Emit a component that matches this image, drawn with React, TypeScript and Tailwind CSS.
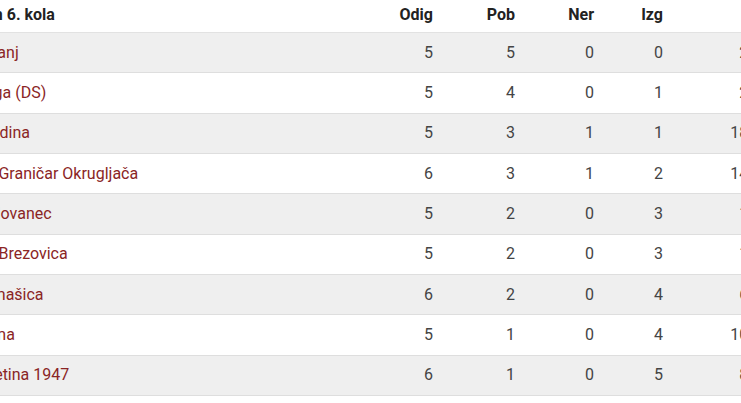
const rows = [
  { name: "Vrbanj", p: [5, 5, 0, 0], g: "23:4", shift: "" },
  { name: "Sloga (DS)", p: [5, 4, 0, 1], g: "21:7", shift: "-ml-[2px]" },
  { name: "Mladina", p: [5, 3, 1, 1], g: "18:10", shift: "" },
  { name: "NK Graničar Okrugljača", p: [6, 3, 1, 2], g: "14:12", shift: "" },
  { name: "Radovanec", p: [5, 2, 0, 3], g: "11:9", shift: "" },
  { name: "NK Brezovica", p: [5, 2, 0, 3], g: "10:9", shift: "" },
  { name: "Bunašica", p: [6, 2, 0, 4], g: "6:14", shift: "ml-[5px]" },
  { name: "Vrbna", p: [5, 1, 0, 4], g: "10:17", shift: "" },
  { name: "Podetina 1947", p: [6, 1, 0, 5], g: "8:19", shift: "-ml-[7px]" },
];

const cols = "grid grid-cols-[400px_70px_82px_79px_69px_107px]";

export default function App() {
  return (
    <div className="w-[741px] h-[403px] overflow-hidden bg-white font-['Roboto',sans-serif] text-[16px]">
      <div className="-ml-[27px] w-[810px]">
        <div className={`${cols} h-[33px] pb-[2px] items-center font-bold text-[#222] border-b border-[#e2e2e2]`}>
          <div className="whitespace-nowrap -ml-[78px]">Poredak nakon 6. kola</div>
          <div className="text-right pr-[10px]">Odig</div>
          <div className="text-right pr-[10px]">Pob</div>
          <div className="text-right pr-[10px]">Ner</div>
          <div className="text-right pr-[10px]">Izg</div>
          <div />
        </div>
        {rows.map((r, i) => (
          <div
            key={r.name}
            className={`${cols} h-[40.33px] items-center border-b border-[#dedede] ${i % 2 === 0 ? "bg-[#efefef]" : "bg-white"}`}
          >
            <div className={`text-[#8a2525] whitespace-nowrap ${r.shift}`}>{r.name}</div>
            {r.p.map((v, j) => (
              <div key={j} className="text-right pr-[10px] text-[#444]">
                {v}
              </div>
            ))}
            <div className="text-right pr-[10px] text-[#444]">{r.g}</div>
          </div>
        ))}
      </div>
    </div>
  );
}
